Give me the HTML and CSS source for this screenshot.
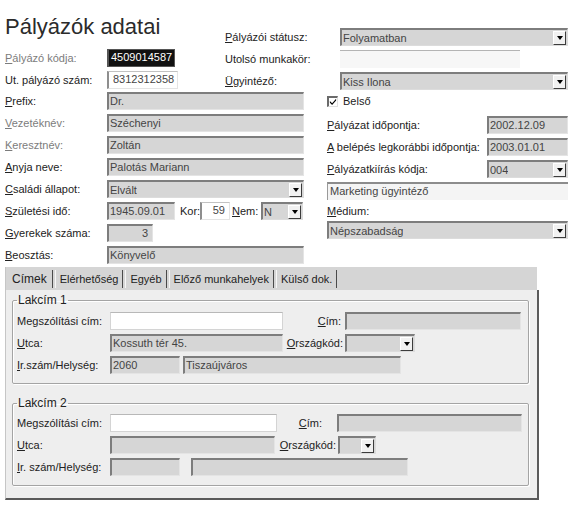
FILE: index.html
```html
<!DOCTYPE html>
<html lang="hu">
<head>
<meta charset="utf-8">
<title>Pályázók adatai</title>
<link rel="stylesheet" href="styles.css">
</head>
<body>
<div class="page">
  <div class="top">
    <div class="top-left">
      <h1 class="title">Pályázók adatai</h1>
      <div class="row"><span class="lbl w102 dim"><u>P</u>ályázó kódja:</span><div class="fld code w68">4509014587</div></div>
      <div class="row"><span class="lbl w102">Ut. pályázó szám:</span><div class="fld white w71 pl4">8312312358</div></div>
    </div>
    <div class="top-right">
      <div class="row"><span class="lbl w115"><u>P</u>ályázói státusz:</span><div class="fld sel w228"><span class="val">Folyamatban</span><span class="btn"></span></div></div>
      <div class="row"><span class="lbl w115">Utolsó munkakör:</span><div class="fld flat w180"></div></div>
      <div class="row"><span class="lbl w115"><u>Ü</u>gyintéző:</span><div class="fld sel w228"><span class="val">Kiss Ilona</span><span class="btn"></span></div></div>
    </div>
  </div>

  <div class="mid">
    <div class="mid-left">
      <div class="row"><span class="lbl w102"><u>P</u>refix:</span><div class="fld w197">Dr.</div></div>
      <div class="row"><span class="lbl w102 dim"><u>V</u>ezetéknév:</span><div class="fld w197">Széchenyi</div></div>
      <div class="row"><span class="lbl w102 dim"><u>K</u>eresztnév:</span><div class="fld w197">Zoltán</div></div>
      <div class="row"><span class="lbl w102"><u>A</u>nyja neve:</span><div class="fld w197">Palotás Mariann</div></div>
      <div class="row"><span class="lbl w102"><u>C</u>saládi állapot:</span><div class="fld sel w197"><span class="val">Elvált</span><span class="btn"></span></div></div>
      <div class="row"><span class="lbl w102"><u>S</u>zületési idő:</span><div class="fld w68">1945.09.01</div><span class="lbl kor">Kor:</span><div class="fld white w30 right">59</div><span class="lbl nem"><u>N</u>em:</span><div class="fld sel w42"><span class="val">N</span><span class="btn"></span></div></div>
      <div class="row"><span class="lbl w102"><u>G</u>yerekek száma:</span><div class="fld w46 right">3</div></div>
      <div class="row"><span class="lbl w102"><u>B</u>eosztás:</span><div class="fld w197">Könyvelő</div></div>
    </div>
    <div class="mid-right">
      <div class="row belso-row"><span class="check"><svg width="9" height="9" viewBox="0 0 9 9"><path d="M1 4 L3.5 6.5 L8 1.5 L8 3.5 L3.5 8.3 L1 5.8 Z" fill="#000"/></svg></span><span class="lbl">Belső</span></div>
      <div class="row"><span class="lbl w160"><u>P</u>ályázat időpontja:</span><div class="fld w81">2002.12.09</div></div>
      <div class="row"><span class="lbl w160"><u>A</u> belépés legkorábbi időpontja:</span><div class="fld w81">2003.01.01</div></div>
      <div class="row"><span class="lbl w160"><u>P</u>ályázatkiírás kódja:</span><div class="fld sel w81"><span class="val">004</span><span class="btn"></span></div></div>
      <div class="row"><div class="fld soft w241">Marketing ügyintéző</div></div>
      <div class="row short"><span class="lbl"><u>M</u>édium:</span></div>
      <div class="row"><div class="fld sel w241"><span class="val">Népszabadság</span><span class="btn"></span></div></div>
    </div>
  </div>

  <div class="tabs">
    <div class="tabstrip">
      <span class="tab active">Címek</span>
      <span class="tab">Elérhetőség</span>
      <span class="tab">Egyéb</span>
      <span class="tab">Előző munkahelyek</span>
      <span class="tab">Külső dok.</span>
    </div>
    <div class="tabbody">
      <fieldset class="box">
        <legend>Lakcím 1</legend>
        <div class="row"><span class="lbl w93">Megszólítási cím:</span><div class="fld input w173"></div><span class="lbl rlbl w62 pr4"><u>C</u>ím:</span><div class="fld w176"></div></div>
        <div class="row"><span class="lbl w93"><u>U</u>tca:</span><div class="fld w173">Kossuth tér 45.</div><span class="lbl rlbl w62 pr2"><u>O</u>rszágkód:</span><div class="fld sel w70"><span class="val"></span><span class="btn"></span></div></div>
        <div class="row"><span class="lbl w93"><u>I</u>r.szám/Helység:</span><div class="fld w70">2060</div><div class="fld w218 ml3">Tiszaújváros</div></div>
      </fieldset>
      <fieldset class="box second">
        <legend>Lakcím 2</legend>
        <div class="row"><span class="lbl w93">Megszólítási cím:</span><div class="fld input w167"></div><span class="lbl rlbl w60 pr15"><u>C</u>ím:</span><div class="fld w185"></div></div>
        <div class="row"><span class="lbl w93"><u>U</u>tca:</span><div class="fld w165"></div><span class="lbl rlbl w63 pr2"><u>O</u>rszágkód:</span><div class="fld sel w38"><span class="val"></span><span class="btn"></span></div></div>
        <div class="row"><span class="lbl w93"><u>I</u>r. szám/Helység:</span><div class="fld w70"></div><div class="fld w217 ml11"></div></div>
      </fieldset>
    </div>
  </div>
</div>
</body>
</html>
```

FILE: styles.css
```css
html, body {
  margin: 0;
  padding: 0;
  background: #fff;
}
body {
  font-family: "Liberation Sans", Arial, sans-serif;
  font-size: 11px;
  color: #222;
  width: 579px;
  height: 508px;
  overflow: hidden;
}
.page {
  padding-left: 5px;
}

/* ---- top block ---- */
.top {
  display: flex;
  height: 90px;
}
.top-left {
  width: 220px;
}
.title {
  margin: 0 0 9px 0;
  padding-top: 14px;
  height: 26px;
  font-size: 22px;
  line-height: 26px;
  font-weight: normal;
  color: #2b2b2b;
}
.top-right {
  padding-top: 28px;
}

.row {
  display: flex;
  align-items: center;
  height: 18px;
  margin-bottom: 4px;
}
.row:last-child {
  margin-bottom: 0;
}
.lbl {
  white-space: nowrap;
  flex: none;
  line-height: 14px;
}
.dim { color: #7c7c7c; }
.rlbl { text-align: right; }
.w60 { width: 60px; }
.w62 { width: 62px; }
.w63 { width: 63px; }
.w93 { width: 93px; }
.w102 { width: 102px; }
.w115 { width: 115px; }
.w160 { width: 160px; }
.pr2 { padding-right: 2px; box-sizing: border-box; }
.pr4 { padding-right: 4px; box-sizing: border-box; }
.pr15 { padding-right: 15px; box-sizing: border-box; }

/* ---- fields ---- */
.fld {
  flex: none;
  box-sizing: border-box;
  height: 18px;
  background: #d6d6d6;
  border-top: 2px solid #7d7d7d;
  border-left: 2px solid #7d7d7d;
  border-right: 1px solid #e4e4e4;
  border-bottom: 1px solid #e4e4e4;
  color: #444;
  font-size: 11px;
  line-height: 14px;
  padding-left: 1px;
  white-space: nowrap;
  overflow: hidden;
}
.fld.white {
  background: #fff;
  border-top: 1px solid #c2c2c2;
  border-left: 2px solid #8e8e8e;
  line-height: 15px;
}
.fld.code {
  background: #111;
  color: #fff;
  border-top: 1px solid #555;
  border-left: 2px solid #555;
  border-right: 1px solid #555;
  border-bottom: 1px solid #555;
  padding-left: 2px;
  line-height: 15px;
}
.fld.flat {
  background: #f7f7f7;
  border: none;
  border-top: 1px solid #b4b4b4;
}
.fld.soft {
  background: #f4f4f4;
  border-top: 2px solid #8c8c8c;
  border-left: 1px solid #9a9a9a;
  border-right: none;
  border-bottom: none;
  padding-left: 2px;
}
.fld.input {
  background: #fff;
  border: 1px solid #d4d4d4;
  border-top-color: #b8b8b8;
}
.fld.right {
  text-align: right;
  padding-right: 4px;
}
.pl4 { padding-left: 4px; }
.ml3 { margin-left: 3px; }
.ml11 { margin-left: 11px; }

.w30 { width: 30px; }
.w38 { width: 38px; }
.w42 { width: 42px; }
.w46 { width: 46px; }
.w68 { width: 68px; }
.w70 { width: 70px; }
.w71 { width: 71px; }
.w81 { width: 81px; }
.w165 { width: 165px; }
.w167 { width: 167px; }
.w173 { width: 173px; }
.w176 { width: 176px; }
.w180 { width: 180px; }
.w185 { width: 185px; }
.w197 { width: 197px; }
.w217 { width: 217px; }
.w218 { width: 218px; }
.w228 { width: 228px; }
.w241 { width: 241px; }

.fld.sel {
  display: flex;
  align-items: center;
  justify-content: space-between;
  padding-right: 1px;
  border-right: 1px solid #dcdcdc;
  border-bottom: 1px solid #dcdcdc;
}
.val {
  overflow: hidden;
}
.btn {
  flex: none;
  box-sizing: border-box;
  width: 13px;
  height: 14px;
  background: #f1f1f1;
  border: 1px solid;
  border-color: #fff #3c3c3c #3c3c3c #fff;
  display: flex;
  align-items: center;
  justify-content: center;
}
.btn::after {
  content: "";
  width: 0;
  height: 0;
  border-left: 3px solid transparent;
  border-right: 3px solid transparent;
  border-top: 4px solid #000;
}

.kor {
  margin-left: 5px;
  width: 20px;
}
.nem {
  margin-left: 2px;
  width: 29px;
}

/* ---- middle block ---- */
.mid {
  display: flex;
  margin-top: 2px;
}
.mid-left {
  width: 322px;
}
.mid-right {
  width: 241px;
}
.belso-row {
  margin-bottom: 6px;
}
.check {
  box-sizing: border-box;
  width: 11px;
  height: 11px;
  background: #fff;
  border-top: 2px solid #6a6a6a;
  border-left: 2px solid #6a6a6a;
  border-right: 1px solid #e0e0e0;
  border-bottom: 1px solid #e0e0e0;
  margin-right: 5px;
  display: flex;
  align-items: center;
  justify-content: center;
}
.check svg { display: block; }
.row.short {
  height: 14px;
  margin-bottom: 3px;
}

/* ---- tabs ---- */
.tabs {
  margin-top: 3px;
  width: 534px;
}
.tabstrip {
  display: flex;
  align-items: center;
  height: 23px;
  width: 532px;
  box-sizing: border-box;
  background: #d5d5d5;
  padding-left: 3px;
  border-left: 1px solid #c6c6c6;
}
.tab {
  height: 18px;
  line-height: 18px;
  padding: 0 4px;
  border-left: 1px solid #f6f6f6;
  border-right: 1px solid #4a4a4a;
  color: #222;
  white-space: nowrap;
}
.tab.active {
  font-size: 12px;
  border-left: none;
  padding-left: 3px;
  padding-right: 5px;
}
.tab + .tab {
  margin-left: 2px;
}
.tabbody {
  box-sizing: border-box;
  height: 210px;
  background: #eeeeee;
  border-left: 1px solid #c6c6c6;
  border-right: 2px solid #5a5a5a;
  border-bottom: 2px solid #5a5a5a;
  padding: 3px 0 0 6px;
}
.box {
  margin: 0;
  width: 517px;
  box-sizing: border-box;
  border: 1px solid #a4a4a4;
  box-shadow: 1px 1px 0 #fff, inset 1px 1px 0 #fff;
  border-radius: 2px;
  padding: 5px 0 9px 4px;
}
.box.second {
  margin-top: 12px;
  padding-top: 4px;
}
legend {
  padding: 0 1px;
  font-size: 12px;
  line-height: 14px;
  color: #222;
}
```
